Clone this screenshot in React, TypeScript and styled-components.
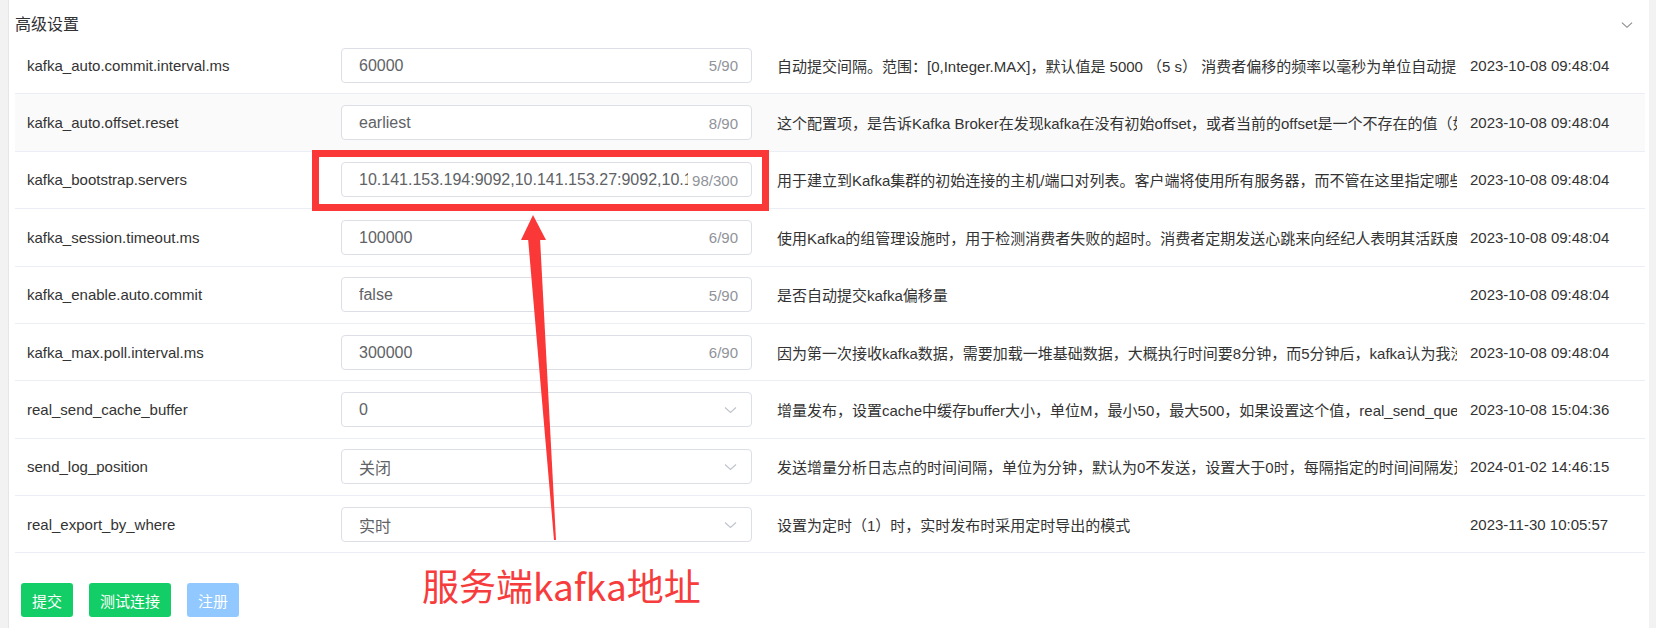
import React from "react";
import styled, { createGlobalStyle } from "styled-components";

const GlobalStyle = createGlobalStyle`
  html, body { margin: 0; padding: 0; background: #f2f2f2; }
  body { font-family: "Liberation Sans", "Noto Sans CJK SC", Arial, sans-serif; }
  * { box-sizing: border-box; }
`;

const Page = styled.div`
  position: relative;
  width: 1656px;
  height: 628px;
  display: flex;
  background: #f2f2f2;
  padding: 0 7px 0 8px;
  overflow: hidden;
`;

const Panel = styled.div`
  flex: 1;
  background: #ffffff;
  border-left: 1px solid #e6e6e6;
  padding: 0 4px 0 6px;
  display: flex;
  flex-direction: column;
`;

const Header = styled.div`
  height: 37px;
  display: flex;
  justify-content: space-between;
  align-items: flex-start;
  flex: none;
`;

const Title = styled.div`
  padding-top: 14px;
  font-size: 16px;
  line-height: 22px;
  color: #303133;
`;

const HeaderChevron = styled.svg`
  margin: 21px 12px 0 0;
  width: 12px;
  height: 8px;
`;

const Table = styled.div`
  display: flex;
  flex-direction: column;
`;

const Row = styled.div<{ $shade?: boolean }>`
  display: grid;
  grid-template-columns: 311px 439px 692px 1fr;
  align-items: center;
  height: 57.375px;
  border-bottom: 1px solid #ebeef5;
  background: ${(p) => (p.$shade ? "#fafafa" : "#ffffff")};
`;

const NameCell = styled.div`
  padding-left: 12px;
  font-size: 15px;
  color: #333333;
  white-space: nowrap;
`;

const FieldCell = styled.div`
  padding: 0 13px 0 15px;
`;

const Field = styled.div`
  height: 35px;
  border: 1px solid #dcdfe6;
  border-radius: 4px;
  background: #ffffff;
  display: flex;
  align-items: center;
  padding: 1px 13px 0 17px;
`;

const ValueInput = styled.input`
  flex: 1;
  min-width: 0;
  border: none;
  outline: none;
  padding: 0;
  background: transparent;
  font-family: "Liberation Sans", "Noto Sans CJK SC", Arial, sans-serif;
  font-size: 16px;
  color: #606266;
`;

const ValueText = styled.span`
  flex: 1;
  font-size: 16px;
  color: #606266;
`;

const Counter = styled.span`
  flex: none;
  margin-left: 4px;
  font-size: 15px;
  color: #909399;
`;

const SelectChevron = styled.svg`
  flex: none;
  width: 13px;
  height: 8px;
  margin-right: 1px;
`;

const DescCell = styled.div`
  padding-left: 12px;
  font-size: 15px;
  color: #333333;
  white-space: nowrap;
  overflow: hidden;
`;

const DateCell = styled.div`
  padding-left: 13px;
  font-size: 15px;
  color: #333333;
  white-space: nowrap;
`;

const ButtonBar = styled.div`
  display: flex;
  gap: 16px;
  margin: 30px 0 0 6px;
`;

const Button = styled.button<{ $kind: "success" | "disabled" }>`
  height: 34px;
  padding: 0 11px;
  border: none;
  border-radius: 3px;
  font-family: "Liberation Sans", "Noto Sans CJK SC", Arial, sans-serif;
  font-size: 15px;
  color: #ffffff;
  background: ${(p) => (p.$kind === "success" ? "#13ce66" : "#90c8ff")};
  cursor: ${(p) => (p.$kind === "success" ? "pointer" : "not-allowed")};
`;

const RedBox = styled.div`
  position: absolute;
  left: 312px;
  top: 150px;
  width: 457px;
  height: 61px;
  border: 7px solid #fb3838;
  pointer-events: none;
`;

const ArrowLayer = styled.svg`
  position: absolute;
  left: 0;
  top: 0;
  width: 1656px;
  height: 628px;
  pointer-events: none;
`;

const Callout = styled.div`
  position: absolute;
  left: 422px;
  top: 563px;
  font-family: "Noto Sans CJK SC", sans-serif;
  font-size: 37px;
  line-height: 45px;
  color: #f63c3c;
  white-space: nowrap;
`;

type Item = {
  name: string;
  value: string;
  count?: string;
  select?: boolean;
  desc: string;
  date: string;
  shade?: boolean;
};

const items: Item[] = [
  {
    name: "kafka_auto.commit.interval.ms",
    value: "60000",
    count: "5/90",
    desc: "自动提交间隔。范围：[0,Integer.MAX]，默认值是 5000 （5 s） 消费者偏移的频率以毫秒为单位自动提交到Kafka",
    date: "2023-10-08 09:48:04",
  },
  {
    name: "kafka_auto.offset.reset",
    value: "earliest",
    count: "8/90",
    desc: "这个配置项，是告诉Kafka Broker在发现kafka在没有初始offset，或者当前的offset是一个不存在的值（如果一个record被删除，就肯定不存在了）时，该如何处理",
    date: "2023-10-08 09:48:04",
    shade: true,
  },
  {
    name: "kafka_bootstrap.servers",
    value: "10.141.153.194:9092,10.141.153.27:9092,10.141.153.195:9092,10.141.153.28:9092,10.141.153.196:9092",
    count: "98/300",
    desc: "用于建立到Kafka集群的初始连接的主机/端口对列表。客户端将使用所有服务器，而不管在这里指定哪些服务器用于引导",
    date: "2023-10-08 09:48:04",
  },
  {
    name: "kafka_session.timeout.ms",
    value: "100000",
    count: "6/90",
    desc: "使用Kafka的组管理设施时，用于检测消费者失败的超时。消费者定期发送心跳来向经纪人表明其活跃度",
    date: "2023-10-08 09:48:04",
  },
  {
    name: "kafka_enable.auto.commit",
    value: "false",
    count: "5/90",
    desc: "是否自动提交kafka偏移量",
    date: "2023-10-08 09:48:04",
  },
  {
    name: "kafka_max.poll.interval.ms",
    value: "300000",
    count: "6/90",
    desc: "因为第一次接收kafka数据，需要加载一堆基础数据，大概执行时间要8分钟，而5分钟后，kafka认为我没有消费数据",
    date: "2023-10-08 09:48:04",
  },
  {
    name: "real_send_cache_buffer",
    value: "0",
    select: true,
    desc: "增量发布，设置cache中缓存buffer大小，单位M，最小50，最大500，如果设置这个值，real_send_queue_size失效",
    date: "2023-10-08 15:04:36",
  },
  {
    name: "send_log_position",
    value: "关闭",
    select: true,
    desc: "发送增量分析日志点的时间间隔，单位为分钟，默认为0不发送，设置大于0时，每隔指定的时间间隔发送一次",
    date: "2024-01-02 14:46:15",
  },
  {
    name: "real_export_by_where",
    value: "实时",
    select: true,
    desc: "设置为定时（1）时，实时发布时采用定时导出的模式",
    date: "2023-11-30 10:05:57",
  },
];

const Chevron = ({ color }: { color: string }) => (
  <path d="M1 1.5 L6.5 6.5 L12 1.5" fill="none" stroke={color} strokeWidth="1.2" />
);

export default function App() {
  return (
    <>
      <GlobalStyle />
      <Page>
        <Panel>
          <Header>
            <Title>高级设置</Title>
            <HeaderChevron viewBox="0 0 13 8">
              <Chevron color="#8a8a8a" />
            </HeaderChevron>
          </Header>
          <Table>
            {items.map((it) => (
              <Row key={it.name} $shade={it.shade}>
                <NameCell>{it.name}</NameCell>
                <FieldCell>
                  <Field>
                    {it.select ? (
                      <>
                        <ValueText>{it.value}</ValueText>
                        <SelectChevron viewBox="0 0 13 8">
                          <Chevron color="#c0c4cc" />
                        </SelectChevron>
                      </>
                    ) : (
                      <>
                        <ValueInput readOnly value={it.value} />
                        <Counter>{it.count}</Counter>
                      </>
                    )}
                  </Field>
                </FieldCell>
                <DescCell>{it.desc}</DescCell>
                <DateCell>{it.date}</DateCell>
              </Row>
            ))}
          </Table>
          <ButtonBar>
            <Button $kind="success">提交</Button>
            <Button $kind="success">测试连接</Button>
            <Button $kind="disabled">注册</Button>
          </ButtonBar>
        </Panel>
        <RedBox />
        <ArrowLayer viewBox="0 0 1656 628">
          <polygon points="533,215 521,240 546,240" fill="#fb3838" />
          <polygon points="528,238 540,238 556,540 554,540" fill="#fb3838" />
        </ArrowLayer>
        <Callout>服务端kafka地址</Callout>
      </Page>
    </>
  );
}
